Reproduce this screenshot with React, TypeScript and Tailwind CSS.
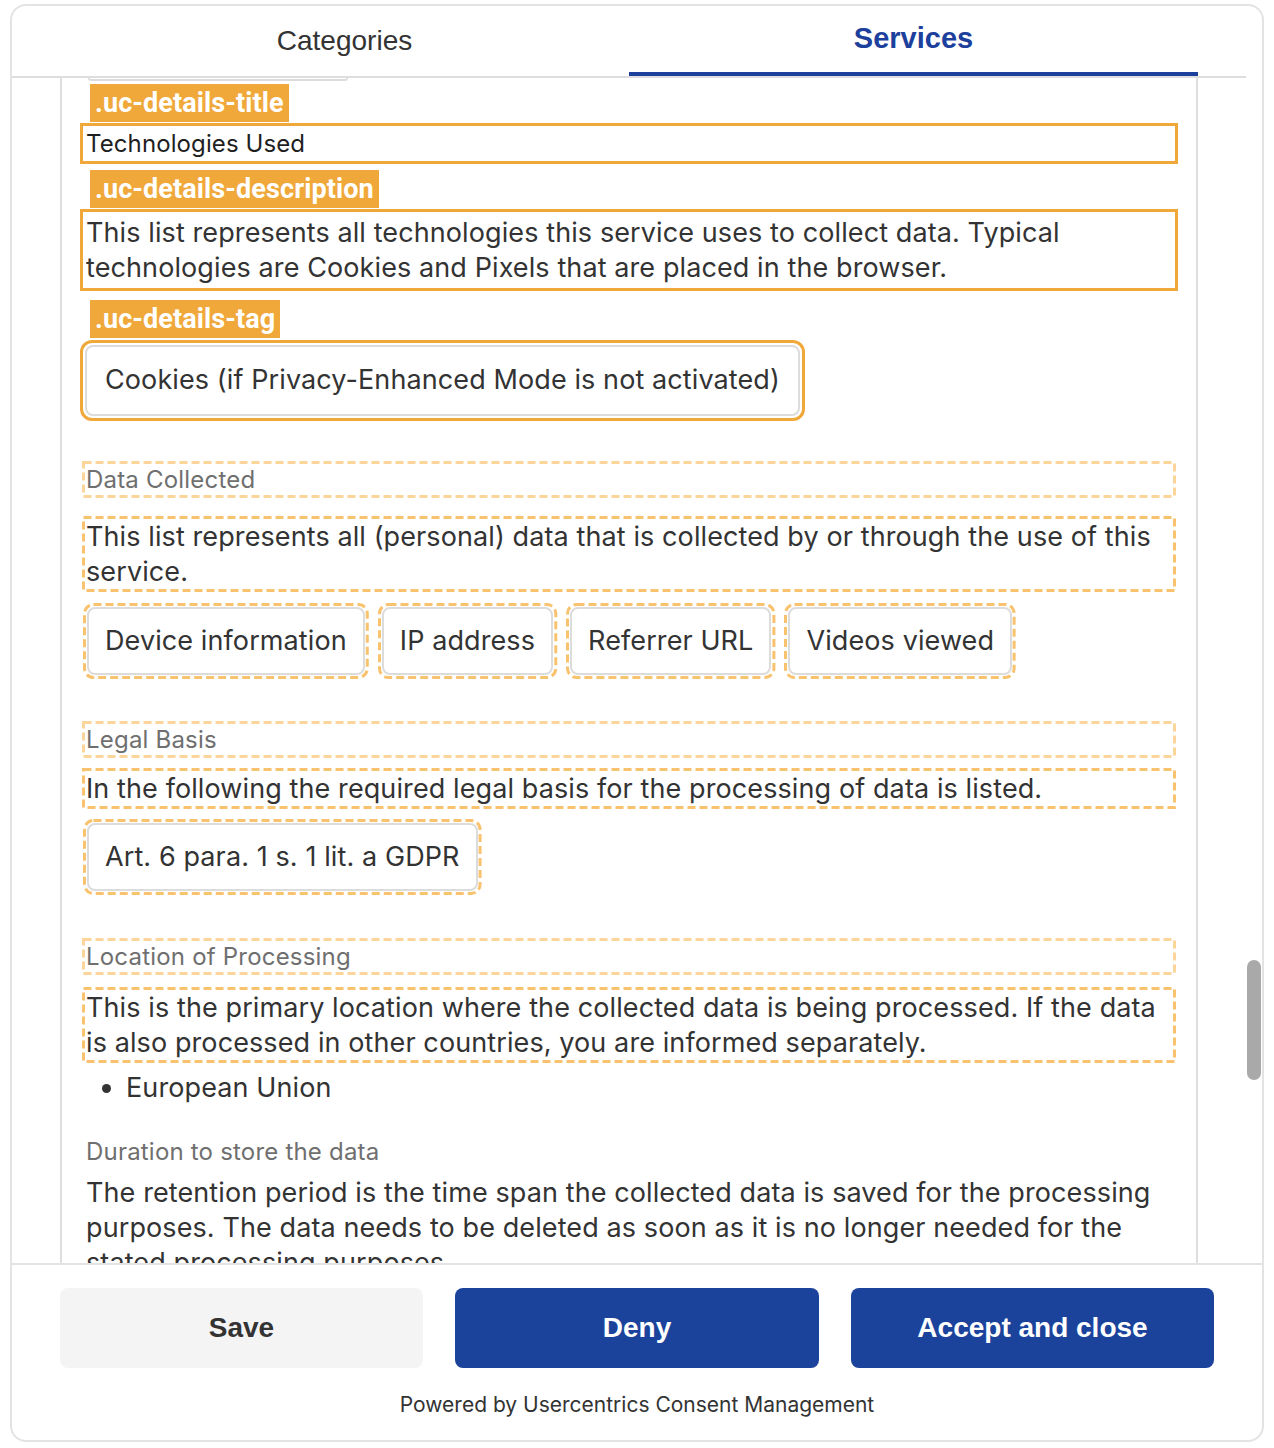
import React from "react";

const Label = ({ text, mt }: { text: string; mt: string }) => (
  <div
    className={`${mt} ml-[8px] self-start shrink-0 h-[38px] px-[5px] flex items-center bg-[#f0a83b] text-white font-['Roboto',sans-serif] font-bold text-[27px] leading-none`}
  >
    {text}
  </div>
);

const Dash = ({ color, rx = 0 }: { color: string; rx?: number }) => (
  <svg className="absolute top-[-3px] left-[-3px] w-[calc(100%+6px)] h-[calc(100%+6px)] pointer-events-none overflow-visible">
    <rect
      x="1.5"
      y="1.5"
      rx={rx}
      className="w-[calc(100%-3px)] h-[calc(100%-3px)]"
      fill="none"
      stroke={color}
      strokeWidth="3"
      strokeDasharray="8 4"
    />
  </svg>
);

const DashedTag = ({ text }: { text: string }) => (
  <div className="relative shrink-0 border-[3px] border-transparent rounded-[10px] p-[1px]">
    <Dash color="#f8c26e" rx={9} />
    <div className="h-[68px] border-2 border-[#dcdcdc] rounded-[8px] px-[16px] flex items-center text-[27px] tracking-[0.1px] text-[#333] whitespace-nowrap">
      {text}
    </div>
  </div>
);

const DashedTitle = ({ text, mt }: { text: string; mt: string }) => (
  <div
    className={`${mt} relative shrink-0 h-[37px] border-[3px] border-transparent pl-[1px] text-[24px] tracking-[0.2px] leading-[31px] text-[#6f6f6f]`}
  >
    <Dash color="#fcd59b" />
    {text}
  </div>
);

const DashedDesc = ({ text, mt, h }: { text: string; mt: string; h: string }) => (
  <div className={`${mt} ${h} relative shrink-0 border-[3px] border-transparent pl-[1px] leading-[35px]`}>
    <Dash color="#f8c26e" />
    {text}
  </div>
);

export default function App() {
  return (
    <div className="min-h-screen bg-white pt-[4px] pl-[10px] font-['Inter',sans-serif]">
      <div className="w-[1254px] h-[1438px] border-2 border-[#e3e3e3] rounded-[16px] flex flex-col overflow-hidden bg-white">
        <div className="flex h-[1257px] shrink-0">
          <div className="w-[1234px] flex flex-col">
            {/* Tabs */}
            <div className="h-[72px] shrink-0 border-b-2 border-[#dedede] pl-[48px] flex">
              <div className="w-[569px] flex items-center justify-center text-[28px] text-[#333] font-['Liberation_Sans',Arial,sans-serif]">
                Categories
              </div>
              <div className="w-[569px] flex items-center justify-center border-b-4 border-[#1c409c] text-[29px] font-bold text-[#1c409c] font-['Liberation_Sans',Arial,sans-serif]">
                Services
              </div>
            </div>
            {/* Body */}
            <div className="flex-1 min-h-0 overflow-hidden flex pl-[48px]">
              <div className="w-[1138px] border-x-2 border-[#dedede] px-[20px] flex flex-col text-[#333] text-[27px] tracking-[0.1px]">
                <div className="ml-[6px] w-[260px] h-[3px] border-x-2 border-b-2 border-[#dcdcdc] rounded-b-[8px] shrink-0" />

                <Label text=".uc-details-title" mt="mt-[3px]" />
                <div className="mt-[1px] -mx-[2px] h-[41px] shrink-0 border-[3px] border-[#f0a83b] pl-[3px] text-[24px] tracking-[0.1px] leading-[35px] text-[#1f1f1f]">
                  Technologies Used
                </div>

                <Label text=".uc-details-description" mt="mt-[6px]" />
                <div className="mt-[1px] -mx-[2px] h-[82px] shrink-0 border-[3px] border-[#f0a83b] pl-[3px] py-[3px] leading-[35px]">
                  This list represents all technologies this service uses to collect data. Typical technologies are Cookies and Pixels that are placed in the browser.
                </div>

                <Label text=".uc-details-tag" mt="mt-[9px]" />
                <div className="mt-[2px] -ml-[2px] self-start shrink-0 border-[3px] border-[#f0a83b] rounded-[12px] p-[2px]">
                  <div className="h-[71px] border-2 border-[#dcdcdc] rounded-[8px] px-[18px] flex items-center whitespace-nowrap">
                    Cookies (if Privacy-Enhanced Mode is not activated)
                  </div>
                </div>

                <DashedTitle text="Data Collected" mt="mt-[40px]" />
                <DashedDesc
                  mt="mt-[18px]"
                  h="h-[76px]"
                  text="This list represents all (personal) data that is collected by or through the use of this service."
                />
                <div className="mt-[11px] ml-[1px] flex gap-[9px] self-start shrink-0">
                  <DashedTag text="Device information" />
                  <DashedTag text="IP address" />
                  <DashedTag text="Referrer URL" />
                  <DashedTag text="Videos viewed" />
                </div>

                <DashedTitle text="Legal Basis" mt="mt-[42px]" />
                <DashedDesc
                  mt="mt-[10px]"
                  h="h-[41px]"
                  text="In the following the required legal basis for the processing of data is listed."
                />
                <div className="mt-[10px] ml-[1px] flex self-start shrink-0">
                  <DashedTag text="Art. 6 para. 1 s. 1 lit. a GDPR" />
                </div>

                <DashedTitle text="Location of Processing" mt="mt-[43px]" />
                <DashedDesc
                  mt="mt-[12px]"
                  h="h-[76px]"
                  text="This is the primary location where the collected data is being processed. If the data is also processed in other countries, you are informed separately."
                />
                <ul className="mt-[7px] pl-[44px] list-disc leading-[35px] shrink-0">
                  <li>European Union</li>
                </ul>

                <div className="mt-[31px] pl-[4px] text-[24px] tracking-[0.2px] leading-[31px] text-[#6f6f6f] shrink-0">
                  Duration to store the data
                </div>
                <div className="mt-[8px] pl-[4px] pr-[3px] leading-[35px] shrink-0">
                  The retention period is the time span the collected data is saved for the processing purposes. The data needs to be deleted as soon as it is no longer needed for the stated processing purposes.
                </div>
              </div>
            </div>
          </div>
          {/* Scrollbar */}
          <div className="w-[16px] pt-[954px]">
            <div className="ml-[1px] w-[14px] h-[120px] rounded-full bg-[#a9a9a9]" />
          </div>
        </div>

        {/* Footer */}
        <div className="flex-1 border-t-2 border-[#e3e3e3] px-[48px] pt-[23px] flex flex-col items-center">
          <div className="flex gap-[32px] w-full">
            <button className="w-[363px] h-[80px] rounded-[8px] bg-[#f4f4f4] text-[#333] font-bold text-[28px] font-['Liberation_Sans',Arial,sans-serif]">
              Save
            </button>
            <button className="w-[364px] h-[80px] rounded-[8px] bg-[#1c439c] text-white font-bold text-[28px] font-['Liberation_Sans',Arial,sans-serif]">
              Deny
            </button>
            <button className="w-[363px] h-[80px] rounded-[8px] bg-[#1c439c] text-white font-bold text-[28px] font-['Liberation_Sans',Arial,sans-serif]">
              Accept and close
            </button>
          </div>
          <div className="mt-[23px] text-[21px] leading-[27px] text-[#333]">
            Powered by Usercentrics Consent Management
          </div>
        </div>
      </div>
    </div>
  );
}
